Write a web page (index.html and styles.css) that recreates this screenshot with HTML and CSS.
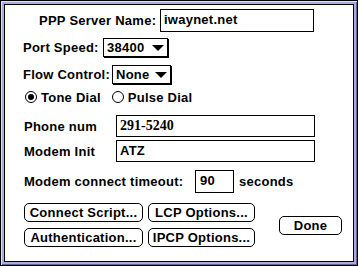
FILE: index.html
```html
<!DOCTYPE html>
<html lang="en">
  <head>
    <meta charset="UTF-8" />
    <title>PPP Configuration</title>
    <link rel="stylesheet" href="styles.css">
  </head>
  <body>
    <div class="window">
      <div class="dialog">
        <div class="row server-row">
          <span class="label server-label">PPP Server Name:</span>
          <div class="field server-field">iwaynet.net</div>
        </div>
        <div class="row port-row">
          <span class="label port-label">Port Speed:</span>
          <div class="popup port-popup"><span>38400</span><span class="arrow"></span></div>
        </div>
        <div class="row flow-row">
          <span class="label flow-label">Flow Control:</span>
          <div class="popup flow-popup"><span>None</span><span class="arrow"></span></div>
        </div>
        <div class="row radio-row">
          <span class="radio checked"></span>
          <span class="radio-text">Tone Dial</span>
          <span class="radio pulse"></span>
          <span class="radio-text">Pulse Dial</span>
        </div>
        <div class="row phone-row">
          <span class="label field-label">Phone num</span>
          <div class="field wide-field serif">291-5240</div>
        </div>
        <div class="row modem-row">
          <span class="label field-label">Modem Init</span>
          <div class="field wide-field">ATZ</div>
        </div>
        <div class="row timeout-row">
          <span class="label timeout-label">Modem connect timeout:</span>
          <div class="field timeout-field">90</div>
          <span class="label seconds">seconds</span>
        </div>
        <div class="bottom">
          <div class="button-grid">
            <div class="button">Connect Script...</div>
            <div class="button">LCP Options...</div>
            <div class="button">Authentication...</div>
            <div class="button">IPCP Options...</div>
          </div>
          <div class="button done">Done</div>
        </div>
      </div>
    </div>
  </body>
</html>
```

FILE: styles.css
```css
body {
  margin: 0;
  padding: 0;
  background-color: #fff;
  font-family: "Liberation Sans", Arial, sans-serif;
  font-weight: bold;
  font-size: 13px;
  letter-spacing: 0.25px;
  color: #000;
}
.window {
  width: 358px;
  height: 266px;
  box-sizing: border-box;
  border: 1px solid #000;
  background-color: #aaaadd;
  box-shadow: inset 1px 1px 0 #ddddff, inset -1px -1px 0 #666699;
  padding: 3px;
}
.dialog {
  height: 100%;
  box-sizing: border-box;
  border: 1px solid #000;
  background-color: #fff;
  padding-left: 18px;
}
.row {
  display: flex;
  align-items: center;
}
.label {
  white-space: nowrap;
}
.field {
  box-sizing: border-box;
  height: 22px;
  border: 1px solid #000;
  padding-left: 3px;
  line-height: 20px;
}
.serif {
  font-family: "Liberation Serif", "Times New Roman", serif;
  font-size: 14px;
  letter-spacing: 0;
}
.server-row {
  margin-top: 4px;
  padding-left: 16px;
}
.server-label {
  width: 121px;
}
.server-field {
  width: 154px;
  height: 23px;
}
.popup {
  box-sizing: border-box;
  height: 19px;
  border: 1px solid #000;
  box-shadow: 1px 1px 0 #000;
  display: flex;
  align-items: center;
  justify-content: space-between;
  padding: 0 3px 0 3px;
}
.arrow {
  width: 0;
  height: 0;
  border-left: 6px solid transparent;
  border-right: 6px solid transparent;
  border-top: 6px solid #000;
}
.port-row {
  margin-top: 6px;
}
.port-label {
  width: 80px;
}
.port-popup {
  width: 65px;
}
.flow-row {
  margin-top: 8px;
}
.flow-label {
  width: 89px;
}
.flow-popup {
  width: 59px;
}
.radio-row {
  margin-top: 7px;
  height: 12px;
  padding-left: 2px;
}
.radio {
  box-sizing: border-box;
  width: 12px;
  height: 12px;
  border: 1px solid #000;
  border-radius: 50%;
  display: flex;
  align-items: center;
  justify-content: center;
}
.radio.checked::after {
  content: "";
  width: 6px;
  height: 6px;
  border-radius: 50%;
  background-color: #000;
}
.radio-text {
  margin-left: 4px;
}
.radio.pulse {
  margin-left: 11px;
}
.phone-row {
  margin-top: 12px;
}
.modem-row {
  margin-top: 3px;
}
.field-label {
  width: 92px;
  padding-left: 1px;
}
.wide-field {
  width: 199px;
}
.timeout-row {
  margin-top: 8px;
  height: 23px;
}
.timeout-label {
  width: 171px;
  padding-left: 1px;
}
.timeout-field {
  width: 39px;
  height: 23px;
  padding-left: 4px;
}
.seconds {
  margin-left: 5px;
}
.bottom {
  display: flex;
  align-items: center;
  margin-top: 10px;
  padding-left: 1px;
}
.button-grid {
  display: grid;
  grid-template-columns: 119px 107px;
  column-gap: 5px;
  row-gap: 6px;
}
.button {
  box-sizing: border-box;
  height: 19px;
  border: 1px solid #000;
  border-radius: 5px;
  text-align: center;
  line-height: 17px;
}
.done {
  width: 63px;
  margin-left: 24px;
}
```
